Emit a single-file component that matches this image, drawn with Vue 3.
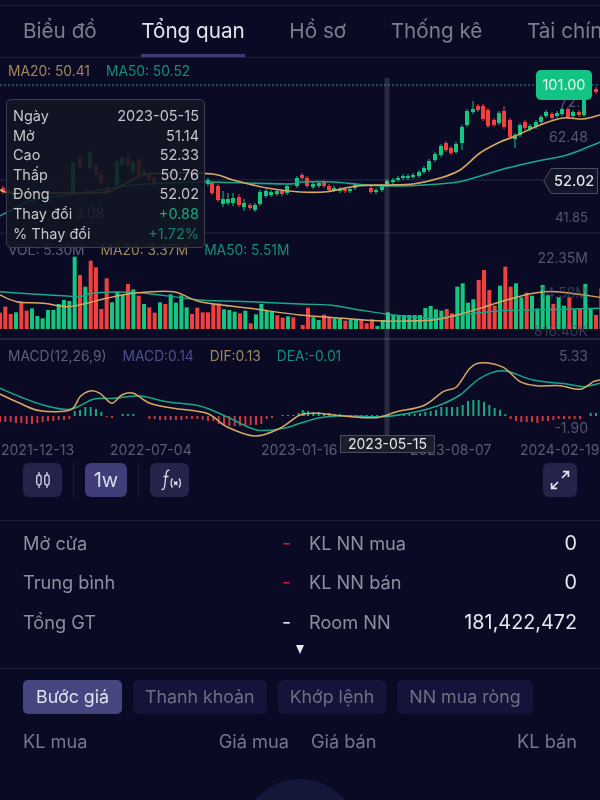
<template>
  <div class="screen">
    <nav class="tabs">
      <span v-for="t in tabs" :key="t" class="tab" :class="{ active: t === 'Tổng quan' }">{{ t }}</span>
    </nav>

    <section class="chart">
      <svg class="plot" width="600" height="405" viewBox="0 58 600 405">
        <line x1="0" x2="600" y1="85" y2="85" stroke="#1f9d86" stroke-dasharray="2 2" />
        <line x1="0" x2="545" y1="180" y2="180" stroke="#262840" />
        <line x1="0" x2="600" y1="233" y2="233" stroke="#232540" />
        <line x1="0" x2="600" y1="339" y2="339" stroke="#232540" stroke-width="2" />

        <g v-for="(c, i) in candles" :key="'c' + i">
          <line :x1="c[0]" :x2="c[0]" :y1="c[4] || c[1] - 2" :y2="c[5] || c[2] + 2" :stroke="tone(c[3])" />
          <rect :x="c[0] - 2" :y="c[1]" width="4" :height="c[2] - c[1]" :fill="tone(c[3])" />
        </g>
        <path :d="ma50" fill="none" stroke="#17a88a" stroke-width="1.6" />
        <path :d="ma20" fill="none" stroke="#d9a860" stroke-width="1.6" />

        <rect
          v-for="(b, i) in volume"
          :key="'v' + i"
          :x="b.x"
          :y="b.y"
          width="4"
          :height="329 - b.y"
          :fill="tone(b.c)"
        />
        <path :d="volMa50" fill="none" stroke="#17a88a" stroke-width="1.4" />
        <path :d="volMa20" fill="none" stroke="#d9a860" stroke-width="1.4" />

        <rect
          v-for="(h, i) in hist"
          :key="'h' + i"
          :x="h.x"
          :y="h.v > 0 ? 416 - h.v : 416"
          width="2"
          :height="Math.abs(h.v)"
          :fill="h.v > 0 ? '#18a67f' : '#c8383e'"
        />
        <path :d="dea" fill="none" stroke="#17a88a" stroke-width="1.5" />
        <path :d="dif" fill="none" stroke="#d9a860" stroke-width="1.5" />

        <rect x="384.5" y="78" width="5" height="357" fill="#fff" opacity=".13" />
      </svg>

      <div class="legend main">
        <span class="gold">MA20: 50.41</span><span class="teal">MA50: 50.52</span>
      </div>
      <div class="legend vol">
        <span class="grey">VOL: 5.30M</span><span class="gold">MA20: 3.37M</span><span class="teal">MA50: 5.51M</span>
      </div>
      <div class="legend macd">
        <span class="grey">MACD(12,26,9)</span><span class="violet">MACD:0.14</span><span class="gold">DIF:0.13</span><span class="teal">DEA:-0.01</span>
      </div>

      <span class="axis" style="top: 35px">72.7</span>
      <span class="axis" style="top: 70px">62.48</span>
      <span class="axis small" style="top: 150px">41.85</span>
      <span class="axis" style="top: 191px">22.35M</span>
      <span class="axis dim" style="top: 226px">14.58M</span>
      <span class="axis dim" style="top: 264px">816.40K</span>
      <span class="axis" style="top: 289px">5.33</span>
      <span class="axis" style="top: 361px">-1.90</span>
      <span class="under">3.08</span>

      <div class="high-tag">101.00<i></i></div>
      <div class="last-tag">
        <svg width="55" height="26" viewBox="0 0 55 26">
          <path d="M8 .5H54.5V25.5H8L.8 13Z" fill="#12142a" stroke="#4c4f60" />
        </svg>
        <b>52.02</b>
      </div>

      <div class="tooltip">
        <div v-for="r in tip" :key="r[0]" class="tip-row">
          <span>{{ r[0] }}</span><span :class="r[2]">{{ r[1] }}</span>
        </div>
      </div>

      <div class="dates">
        <span style="left: 1px">2021-12-13</span>
        <span style="left: 110px">2022-07-04</span>
        <span style="left: 261px">2023-01-16</span>
        <span style="left: 410px">2023-08-07</span>
        <span style="left: 520px">2024-02-19</span>
      </div>
      <div class="date-tag">2023-05-15</div>
    </section>

    <div class="toolbar">
      <button class="tool">
        <svg width="16" height="18" viewBox="0 0 16 18" fill="none" stroke="#c9c9dc" stroke-width="1.4">
          <path d="M4 1v3M4 14v3M12 1v3M12 14v3" />
          <rect x="1.7" y="4" width="4.4" height="10" rx="2.2" />
          <rect x="9.7" y="4" width="4.4" height="10" rx="2.2" />
        </svg>
      </button>
      <span class="sep"></span>
      <button class="tool wide on">1w</button>
      <span class="sep"></span>
      <button class="tool fx">
        <svg width="26" height="26" viewBox="0 0 26 26" fill="none" stroke="#dcdce8" stroke-width="1.3">
          <path d="M12.5 3.5C10.5 2.6 9.6 4 9.2 6.5L7.6 19.5C7.2 22 6 23 4.5 22.2M6.5 9.5h5" />
          <path d="M15.5 11.5C13.6 14 13.6 18 15.5 20.5M22 11.5C23.9 14 23.9 18 22 20.5" />
          <path d="M17 14.5l3.4 3.4M20.4 14.5 17 17.9" stroke-width="1.5" />
        </svg>
      </button>
      <button class="tool expand">
        <svg width="20" height="20" viewBox="0 0 20 20" fill="none" stroke="#e6e6f0" stroke-width="1.7">
          <path d="M12 8 18 2M13 1.6h5.4V7M8 12l-6 6M7 18.4H1.6V13" />
        </svg>
      </button>
    </div>

    <section class="stats">
      <div class="stat"><span>Mở cửa</span><b class="red">-</b></div>
      <div class="stat"><span>KL NN mua</span><b>0</b></div>
      <div class="stat"><span>Trung bình</span><b class="red">-</b></div>
      <div class="stat"><span>KL NN bán</span><b>0</b></div>
      <div class="stat"><span>Tổng GT</span><b>-</b></div>
      <div class="stat"><span>Room NN</span><b>181,422,472</b></div>
    </section>
    <div class="more"><i></i></div>

    <section class="book">
      <div class="pills">
        <span v-for="p in pills" :key="p" class="pill" :class="{ on: p === 'Bước giá' }">{{ p }}</span>
      </div>
      <div class="book-head">
        <span>KL mua</span><span>Giá mua</span><span>Giá bán</span><span>KL bán</span>
      </div>
    </section>

    <div class="fab"></div>
  </div>
</template>

<script setup>
const tabs = ['Biểu đồ', 'Tổng quan', 'Hồ sơ', 'Thống kê', 'Tài chính']
const pills = ['Bước giá', 'Thanh khoản', 'Khớp lệnh', 'NN mua ròng']
const tip = [
  ['Ngày', '2023-05-15'],
  ['Mở', '51.14'],
  ['Cao', '52.33'],
  ['Thấp', '50.76'],
  ['Đóng', '52.02'],
  ['Thay đổi', '+0.88', 'up'],
  ['% Thay đổi', '+1.72%', 'up2'],
]

const tone = (c) => (c === 'r' ? '#f2403f' : '#14c77f')

// x, top, bottom, colour, wick top, wick bottom
const candles = [
  [3, 188, 192, 'r'], [8, 190, 194, 'r'], [14, 192, 197, 'g'], [73, 163, 192, 'g'], [80, 158, 167, 'r'],
  [90, 152, 168, 'g', 148], [96, 165, 175, 'r'], [101, 175, 183, 'r'], [107, 187, 192, 'r'],
  [117, 162, 185, 'g'], [122, 158, 165, 'g'], [128, 157, 165, 'r', 152], [133, 162, 172, 'g'],
  [139, 160, 177, 'r'], [144, 171, 175, 'g'], [149, 175, 180, 'r'], [154, 178, 183, 'r'],
  [208, 180, 184, 'g'], [212, 183, 193, 'r'], [218, 186, 200, 'r'], [223, 199, 204, 'g', 191, 207],
  [228, 199, 203, 'g', 193], [233, 198, 203, 'g', 193, 206], [239, 197, 205, 'r', 194], [244, 203, 207, 'g', 199, 211],
  [250, 205, 208, 'r'], [255, 205, 210, 'g'], [260, 192, 204, 'g'], [266, 191, 196, 'g'], [271, 192, 195, 'g'],
  [277, 191, 194, 'g'], [282, 191, 194, 'r'], [287, 186, 193, 'g'], [297, 178, 186, 'g'], [302, 175, 178, 'r'],
  [307, 178, 186, 'r'], [313, 184, 187, 'g'], [319, 183, 186, 'g'], [324, 182, 186, 'r'], [329, 186, 190, 'r'],
  [334, 188, 190, 'g'], [340, 189, 191, 'g'], [345, 189, 191, 'r'], [350, 189, 191, 'g'], [355, 185, 188, 'g'],
  [371, 188, 192, 'r'], [376, 190, 192, 'g'], [382, 186, 190, 'g'], [387, 181, 184, 'g'], [393, 180, 182, 'g'],
  [398, 178, 180, 'g'], [403, 176, 178, 'g'], [408, 176, 178, 'g'], [413, 175, 177, 'g'], [419, 172, 176, 'g'],
  [424, 168, 172, 'g'], [429, 161, 170, 'g'], [435, 154, 160, 'g'], [441, 146, 155, 'g'], [446, 143, 150, 'r'],
  [451, 148, 153, 'r'], [456, 144, 152, 'g'], [462, 127, 143, 'g', 125, 150], [467, 111, 125, 'g'], [473, 109, 112, 'g', 101],
  [478, 106, 110, 'r'], [483, 106, 119, 'r'], [488, 110, 126, 'r'], [494, 120, 125, 'r'], [499, 113, 123, 'g'],
  [504, 111, 127, 'r', 106], [510, 120, 137, 'r'], [515, 135, 139, 'g', 133, 148], [520, 125, 135, 'g'], [525, 122, 128, 'r'],
  [530, 126, 129, 'g'], [536, 122, 127, 'g'], [541, 117, 122, 'g'], [546, 112, 116, 'g'], [552, 114, 118, 'r'],
  [557, 113, 116, 'g'], [562, 109, 114, 'g'], [568, 109, 117, 'r'], [573, 112, 116, 'g'], [579, 112, 115, 'r'],
  [584, 100, 115, 'g'], [590, 88, 92, 'r'], [596, 89, 92, 'r'],
]

function smooth(pts) {
  let d = `M${pts[0][0]} ${pts[0][1]}`
  for (let i = 0; i < pts.length - 1; i++) {
    const a = pts[Math.max(i - 1, 0)]
    const b = pts[i]
    const c = pts[i + 1]
    const e = pts[Math.min(i + 2, pts.length - 1)]
    const x1 = b[0] + (c[0] - a[0]) / 6
    const y1 = b[1] + (c[1] - a[1]) / 6
    const x2 = c[0] - (e[0] - b[0]) / 6
    const y2 = c[1] - (e[1] - b[1]) / 6
    d += `C${x1.toFixed(1)} ${y1.toFixed(1)} ${x2.toFixed(1)} ${y2.toFixed(1)} ${c[0]} ${c[1]}`
  }
  return d
}

// Points read off a 3x crop of the pane starting at (xo, 240)
const pane = (list, xo) => list.map(([x, y]) => [+(x / 3 + xo).toFixed(1), +(240 + y / 3).toFixed(1)])

const ma20 = smooth([
  [0, 190], [10, 193], [33, 193], [73, 193], [107, 192], [125, 184], [143, 175], [167, 173], [213, 174], [233, 180],
  [267, 188], [300, 192], [327, 191.7], [357, 186], [387, 185], [413, 184], [440, 178], [460, 170], [480, 153],
  [500, 142], [513, 137], [540, 125], [563, 118], [583, 119], [600, 115],
])
const ma50 = smooth([
  [0, 216], [17, 207], [33, 200], [67, 195], [100, 190], [133, 185], [167, 183], [207, 182], [287, 184], [300, 182],
  [333, 182], [367, 185], [400, 186], [450, 183], [467, 180], [500, 170], [533, 162], [567, 155], [593, 145], [600, 142],
])
const volMa50 = smooth([
  ...pane([[0, 155], [100, 162], [200, 168], [240, 170], [290, 158], [420, 158], [600, 180], [750, 185]], 0),
  ...pane([[0, 192], [90, 195], [180, 210], [280, 225], [400, 235], [460, 228], [600, 212], [700, 210], [900, 205]], 300),
])
const volMa20 = smooth([
  ...pane([[0, 165], [50, 185], [130, 190], [200, 200], [260, 190], [320, 175], [400, 160], [520, 155], [600, 185], [750, 205]], 0),
  ...pane([[0, 225], [130, 235], [250, 243], [400, 240], [470, 225], [540, 205], [620, 180], [700, 160], [770, 155], [900, 172]], 300),
])
const dif = smooth([
  ...pane([[0, 462], [60, 490], [120, 512], [210, 510], [240, 470], [270, 453], [300, 460], [335, 490], [365, 465], [400, 460], [450, 490], [520, 505], [620, 520], [680, 560], [765, 588], [840, 565]], 0),
  ...pane([[0, 525], [50, 520], [130, 528], [230, 533], [290, 515], [370, 497], [430, 455], [470, 440], [510, 385], [545, 368], [610, 382], [660, 425], [710, 437], [780, 437], [840, 448], [880, 425], [900, 420]], 300),
])
const dea = smooth([
  ...pane([[0, 445], [60, 470], [130, 495], [210, 508], [280, 478], [340, 475], [420, 468], [500, 485], [600, 498], [680, 530], [770, 570], [850, 565]], 0),
  ...pane([[0, 550], [60, 533], [130, 527], [250, 530], [350, 515], [420, 495], [480, 465], [540, 415], [610, 392], [700, 420], [800, 432], [850, 440], [900, 430]], 300),
])

// Volume bars: crop-y of the bar top, in steps of 16 crop pixels
const volLeft = [
  [218, 'r'], [200, 'r'], [222, 'r'], [217, 'g'], [188, 'r'], [212, 'r'], [205, 'g'], [228, 'g'], [235, 'g'], [210, 'g'],
  [210, 'g'], [192, 'g'], [180, 'g'], [183, 'g'], [50, 'g'], [105, 'r'], [140, 'g'], [62, 'r'], [82, 'r'], [207, 'r'],
  [115, 'r'], [187, 'g'], [155, 'g'], [165, 'g'], [132, 'r'], [148, 'g'], [167, 'r'], [192, 'g'], [202, 'r'], [218, 'r'],
  [187, 'g'], [192, 'r'], [163, 'g'], [188, 'g'], [166, 'g'], [202, 'g'], [222, 'r'], [203, 'r'], [217, 'r'], [217, 'r'],
  [190, 'r'], [190, 'r'], [208, 'g'], [210, 'g'], [215, 'g'], [220, 'r'], [212, 'g'], [250, 'r'], [223, 'g'], [192, 'g'],
  [212, 'g'], [215, 'g'], [226, 'r'], [233, 'r'], [229, 'g'], [232, 'r'],
]
const volRight = [
  [255, 'r'], [203, 'r'], [232, 'g'], [240, 'g'], [224, 'r'], [230, 'r'], [235, 'g'], [235, 'g'], [242, 'r'], [238, 'g'],
  [238, 'g'], [240, 'r'], [250, 'r'], [238, 'r'], [258, 'g'], [240, 'g'], [217, 'g'], [225, 'g'], [225, 'g'], [225, 'g'],
  [225, 'g'], [225, 'g'], [225, 'g'], [204, 'g'], [198, 'g'], [208, 'g'], [212, 'g'], [207, 'r'], [220, 'r'], [140, 'g'],
  [130, 'g'], [188, 'g'], [178, 'g'], [120, 'r'], [90, 'r'], [150, 'r'], [197, 'r'], [137, 'g'], [80, 'r'], [140, 'r'],
  [130, 'g'], [172, 'g'], [158, 'r'], [167, 'g'], [205, 'g'], [135, 'g'], [165, 'g'], [192, 'r'], [172, 'g'], [197, 'g'],
  [172, 'r'], [208, 'g'], [207, 'r'], [132, 'g'], [205, 'g'], [225, 'r'], [145, 'r'],
]
const volume = [
  ...volLeft.map(([y, c], i) => ({ x: (i * 16) / 3 - 2, y: 240 + y / 3, c })),
  ...volRight.map(([y, c], i) => ({ x: 300 + ((i * 16 + 8) / 3) - 2, y: 240 + y / 3, c })),
]

const histLeft = [
  -6, -6, -6, -7, -7, -8, -8, -7, -6, -5, -5, -4, -4, -3, 5, 6, 9, 9, 7, 4, -1, -2, 0, 2, 2, 2, 0, 0, -3, -3, -4, -4, -4, -4,
  -4, -3, -3, -3, -4, -5, -5, -8, -9, -10, -10, -10, -9, -9, -9, -8, -3, -2, 0, 1, 1, 1, 3, 4,
]
const histRight = [
  6, 5, 4, 4, 3, 3, 2, 2, 1, 1, 1, 1, 1, 1, 1, 1, 1, 1, 1, 2, 2, 2, 3, 4, 5, 6, 9, 9, 9, 9, 11, 15, 16, 16, 14, 11, 8, 6, 2,
  -3, -5, -6, -6, -6, -7, -5, -5, -4, -3, -3, -3, -3, -3, 0, 3, 3, 3,
]
const hist = [
  ...histLeft.map((v, i) => ({ x: (i * 16) / 3 - 1, v })),
  ...histRight.map((v, i) => ({ x: 300 + (i * 16 + 8) / 3 - 1, v })),
]
</script>

<style>
body { background: #0a0a24; }
</style>

<style scoped>
.screen {
  position: relative;
  width: 600px;
  height: 800px;
  overflow: hidden;
  background: #0a0a24;
  color: #8f8f9f;
  font-family: Inter, "Noto Sans", sans-serif;
  filter: blur(.35px);
}

.tabs {
  height: 51px;
  margin-top: 5px;
  padding-left: 23px;
  display: flex;
  gap: 44.5px;
  border-top: 1px solid #1d1d3a;
  border-bottom: 1px solid #1f1f3c;
  white-space: nowrap;
}
.tab {
  height: 51px;
  line-height: 50px;
  font-size: 20.7px;
  color: #7d7d8d;
}
.tab.active { color: #e4e4ec; border-bottom: 3px solid #3d3a78; height: 48px; }

.chart { position: relative; height: 405px; }
.plot { display: block; }

.legend {
  position: absolute;
  left: 8px;
  display: flex;
  gap: 16px;
  font-size: 13.8px;
  line-height: 16px;
  white-space: nowrap;
}
.legend.main { top: 5px; }
.legend.vol { top: 184px; }
.legend.macd { top: 290px; }
.gold { color: #a08a5c; }
.teal { color: #14907a; }
.grey { color: #5f6074; }
.violet { color: #4f4f92; }

.axis {
  position: absolute;
  right: 12px;
  font-size: 14px;
  line-height: 18px;
  color: #55566c;
}
.axis.small { font-size: 13px; }
.axis.dim { opacity: .6; }
.under {
  position: absolute;
  left: 75px;
  top: 146px;
  font-size: 14px;
  line-height: 18px;
  color: #8a8a9a;
}

.high-tag {
  position: absolute;
  left: 536px;
  top: 12px;
  width: 56px;
  height: 30px;
  border-radius: 5px;
  background: #12c384;
  color: #dff8ee;
  font-size: 14.5px;
  line-height: 30px;
  text-align: center;
}
.high-tag i {
  position: absolute;
  left: 46px;
  top: 30px;
  width: 4px;
  height: 12px;
  background: #12c384;
}

.last-tag { position: absolute; left: 543px; top: 110px; width: 55px; height: 26px; }
.last-tag svg { display: block; }
.last-tag b {
  position: absolute;
  left: 11px;
  top: 0;
  font-size: 14.5px;
  font-weight: 500;
  line-height: 26px;
  color: #e4e4ea;
}

.tooltip {
  position: absolute;
  left: 6px;
  top: 41px;
  width: 199px;
  height: 149px;
  box-sizing: border-box;
  padding: 6px 5px 0 6px;
  border: 1px solid #3a3e4e;
  border-radius: 5px;
  background: rgba(18, 22, 34, .88);
  font-size: 14.5px;
  color: #c6c6cc;
}
.tip-row { display: flex; justify-content: space-between; height: 19.6px; line-height: 19.6px; }
.up { color: #16a87c; }
.up2 { color: #13806a; }

.dates span {
  position: absolute;
  top: 383px;
  font-size: 14px;
  line-height: 18px;
  color: #5b5c70;
  white-space: nowrap;
}
.date-tag {
  position: absolute;
  left: 340px;
  top: 377px;
  width: 95px;
  height: 18px;
  box-sizing: border-box;
  border: 1px solid #4a4d58;
  background: #1b1f2b;
  color: #e6e6ea;
  font-size: 14px;
  line-height: 16px;
  text-align: center;
}

.toolbar {
  height: 34px;
  padding: 0 23px;
  display: flex;
  align-items: center;
}
.tool {
  width: 39px;
  height: 34px;
  padding: 0;
  border: 0;
  border-radius: 6px;
  background: #24244a;
  display: flex;
  align-items: center;
  justify-content: center;
  color: #dcdce8;
  font-family: inherit;
}
.tool.wide { width: 42px; font-size: 20px; }
.tool.on { background: #3f3e78; }
.tool.expand { width: 34px; margin-left: auto; }
.sep { width: 1px; height: 34px; margin: 0 11px; background: #1b1b38; }

.stats {
  margin-top: 23px;
  padding: 2px 23px 0;
  border-top: 1px solid #1c1c38;
  display: grid;
  grid-template-columns: 268px 268px;
  column-gap: 18px;
}
.stat {
  height: 39.5px;
  display: flex;
  align-items: center;
  justify-content: space-between;
  font-size: 18.2px;
}
.stat b { font-weight: 400; font-size: 19.8px; color: #e8e8ee; }
.stat b.red { color: #b8243a; }

.more { height: 26.5px; display: flex; justify-content: center; }
.more i {
  width: 0;
  height: 0;
  margin-top: 3.5px;
  border-left: 4.5px solid transparent;
  border-right: 4.5px solid transparent;
  border-top: 9px solid #e8e8ee;
}

.book { border-top: 1px solid #1c1c38; padding: 11px 23px 0; }
.pills { display: flex; gap: 11px; }
.pill {
  height: 34px;
  padding: 0 12px;
  border-radius: 5px;
  background: #14143a;
  font-size: 17.8px;
  line-height: 34px;
  color: #6f6f82;
}
.pill.on { padding: 0 13px; background: #45457f; color: #e2e2f0; }

.book-head {
  margin-top: 16px;
  display: grid;
  grid-template-columns: 1fr 90px 90px 1fr;
  column-gap: 22px;
  font-size: 18.2px;
  line-height: 22px;
  color: #77778a;
}
.book-head span:nth-child(2), .book-head span:nth-child(4) { text-align: right; }

.fab {
  position: absolute;
  left: 241px;
  top: 779px;
  width: 118px;
  height: 118px;
  border-radius: 50%;
  background: #14163a;
}
</style>
